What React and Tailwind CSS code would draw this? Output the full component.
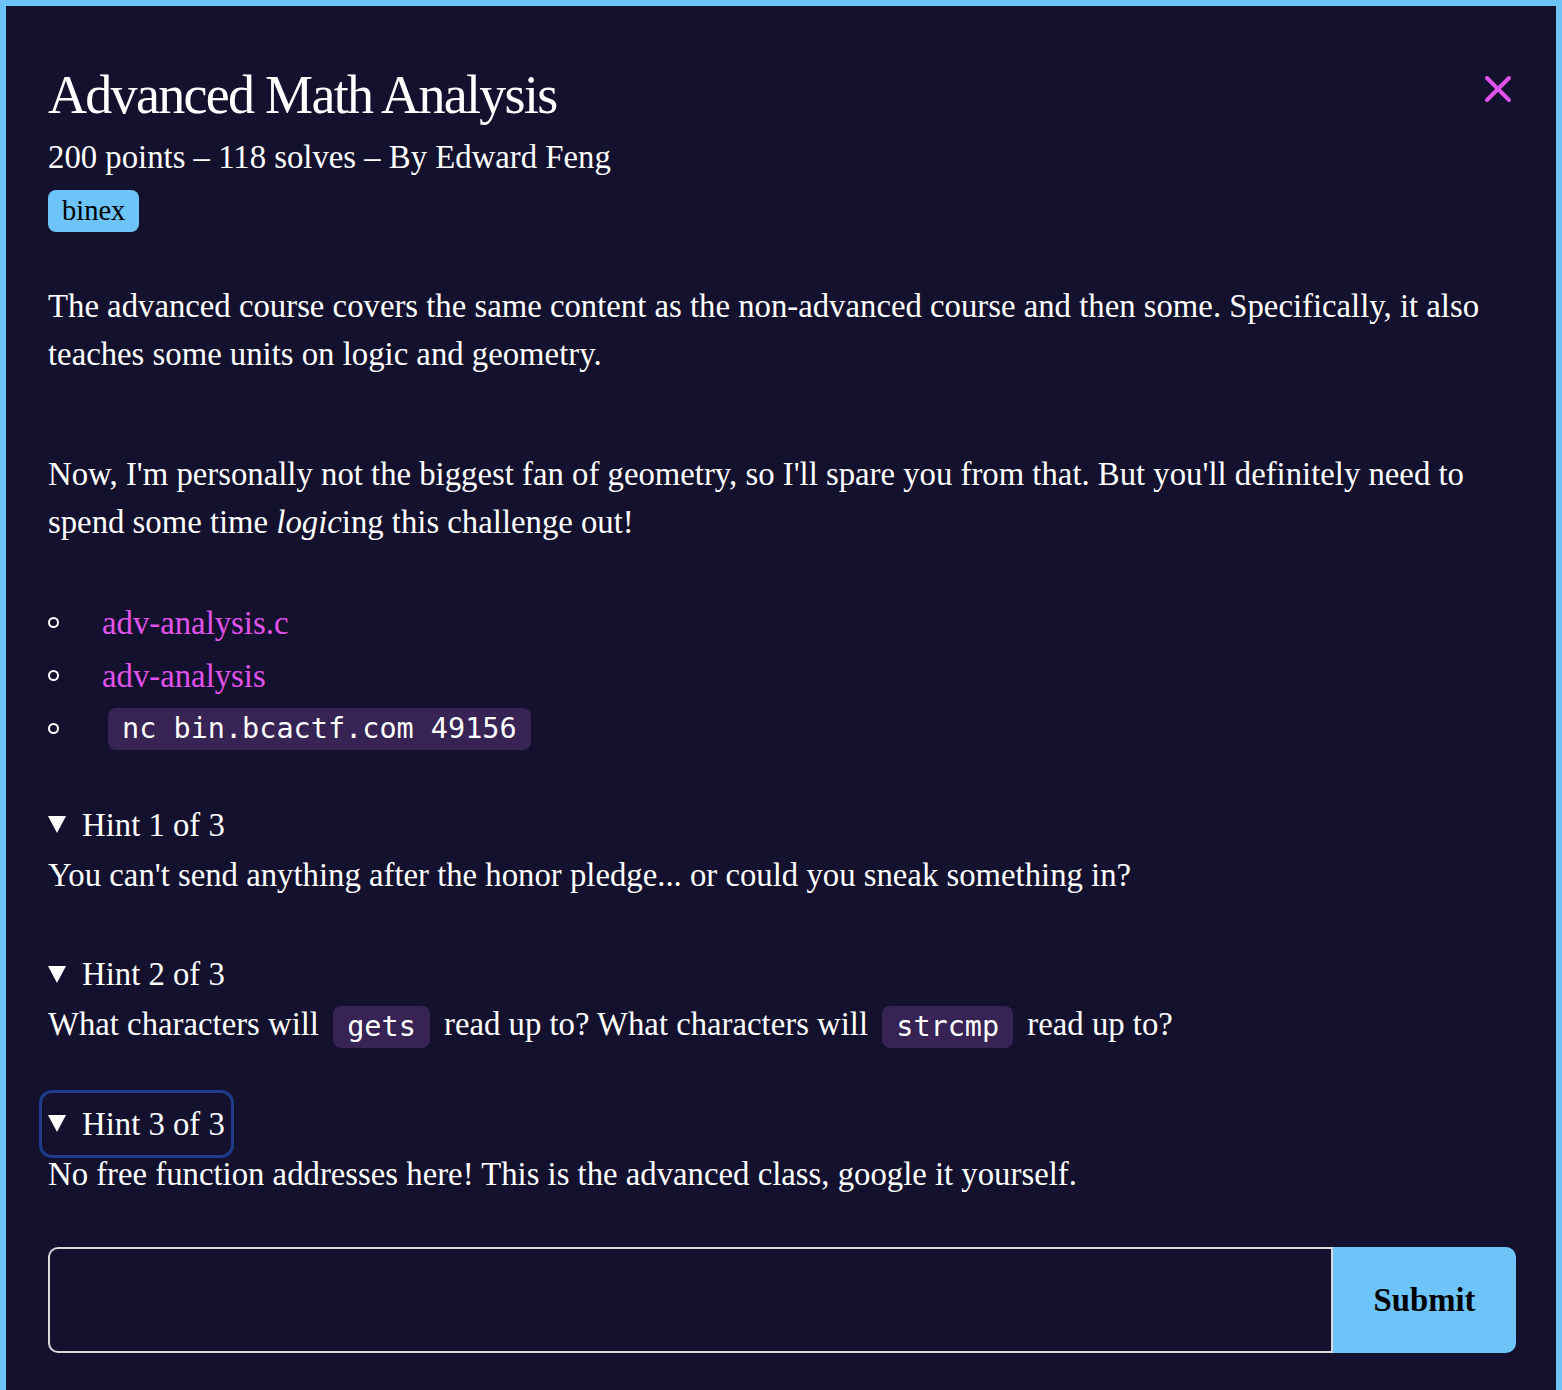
const SERIF = "font-['Liberation_Serif','Times_New_Roman',serif]"
const MONO = "font-['DejaVu_Sans_Mono','Liberation_Mono',monospace]"

const FILES = [
  { name: 'adv-analysis.c', href: '#' },
  { name: 'adv-analysis', href: '#' },
]

function Code({ children }) {
  return (
    <code className={`${MONO} text-[28.5px] leading-[42px] inline-block px-[14px] rounded-[8px] bg-[#372354] text-white align-middle`}>
      {children}
    </code>
  )
}

function Triangle() {
  return (
    <svg width="18" height="17" viewBox="0 0 18 17" className="shrink-0">
      <path d="M0 0 H18 L9 17 Z" fill="white" />
    </svg>
  )
}

function Hint({ n, focused, children }) {
  return (
    <div className="mb-[48px]">
      <div
        className={[
          'inline-flex items-center gap-[16px] h-[50px] rounded-[4px]',
          focused ? 'outline-3 outline-solid outline-offset-[6px] outline-[#1e3c8c]' : '',
        ].join(' ')}
      >
        <Triangle />
        <span>Hint {n} of 3</span>
      </div>
      <div className="leading-[50px]">{children}</div>
    </div>
  )
}

export default function App() {
  return (
    <div className={`${SERIF} min-h-screen bg-[#14112e] text-white border-[6px] border-b-0 border-[#6cc4f8] pl-[42px] pr-[40px] pt-[59px] pb-[40px] text-[32.75px] leading-[48px]`}>

      {/* Header */}
      <div className="flex items-start justify-between">
        <div>
          <h1 className="text-[54px] leading-[60px] tracking-[-1.7px]">Advanced Math Analysis</h1>
          <div className="mt-[14px] leading-[36px]">
            200 points – 118 solves – By Edward Feng
          </div>
          <span className="inline-block mt-[15px] px-[14px] h-[42px] leading-[42px] text-[28.5px] rounded-[8px] bg-[#6cc4f8] text-black">
            binex
          </span>
        </div>
        <button className="mt-[10px] mr-[4px] text-[#e052ea]" aria-label="Close">
          <svg width="28" height="28" viewBox="0 0 28 28">
            <path d="M3 3 L25 25 M25 3 L3 25" stroke="currentColor" strokeWidth="4" strokeLinecap="round" />
          </svg>
        </button>
      </div>

      {/* Description */}
      <p className="mt-[49px]">
        The advanced course covers the same content as the non-advanced course and then some. Specifically, it also teaches some units on logic and geometry.
      </p>
      <p className="mt-[72px]">
        Now, I'm personally not the biggest fan of geometry, so I'll spare you from that. But you'll definitely need to spend some time <em>logic</em>ing this challenge out!
      </p>

      {/* Files */}
      <ul className="mt-[50px]">
        {FILES.map(f => (
          <li key={f.name} className="flex items-center h-[53px]">
            <span className="w-[11px] h-[11px] rounded-full border-2 border-white mr-[43px]" />
            <a href={f.href} className="text-[#e052ea]">{f.name}</a>
          </li>
        ))}
        <li className="flex items-center h-[53px]">
          <span className="w-[11px] h-[11px] rounded-full border-2 border-white mr-[49px]" />
          <Code>nc bin.bcactf.com 49156</Code>
        </li>
      </ul>

      {/* Hints */}
      <div className="mt-[43px]">
        <Hint n={1}>You can't send anything after the honor pledge... or could you sneak something in?</Hint>
        <Hint n={2}>
          What characters will <span className="mx-[6px]"><Code>gets</Code></span> read up to? What characters will <span className="mx-[6px]"><Code>strcmp</Code></span> read up to?
        </Hint>
        <Hint n={3} focused>No free function addresses here! This is the advanced class, google it yourself.</Hint>
      </div>

      {/* Flag input */}
      <form className="flex h-[106px]" onSubmit={e => e.preventDefault()}>
        <input
          type="text"
          className="flex-1 min-w-0 bg-transparent border-2 border-r-0 border-[#d9d9d9] rounded-l-[10px] outline-none px-4 text-white"
        />
        <button type="submit" className="w-[185px] bg-[#6cc4f8] text-black font-bold rounded-r-[10px] border-l-2 border-[#d9d9d9]">
          Submit
        </button>
      </form>
    </div>
  )
}
